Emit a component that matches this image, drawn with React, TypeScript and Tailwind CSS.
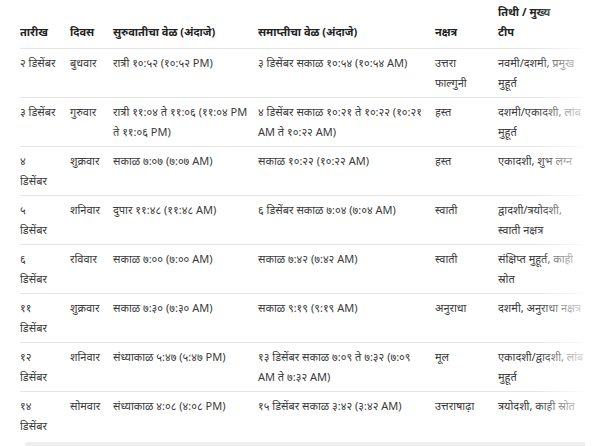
type Row = {
    date: string[];
    day: string;
    start: string[];
    end: string[];
    nakshatra: string[];
    tithi: string[];
}

const rows: Row[] = [
    { date: ["२ डिसेंबर"], day: "बुधवार", start: ["रात्री १०:५२ (१०:५२ PM)"], end: ["३ डिसेंबर सकाळ १०:५४ (१०:५४ AM)"], nakshatra: ["उत्तरा", "फाल्गुनी"], tithi: ["नवमी/दशमी, प्रमुख", "मुहूर्त"] },
    { date: ["३ डिसेंबर"], day: "गुरुवार", start: ["रात्री ११:०४ ते ११:०६ (११:०४ PM", "ते ११:०६ PM)"], end: ["४ डिसेंबर सकाळ १०:२१ ते १०:२२ (१०:२१", "AM ते १०:२२ AM)"], nakshatra: ["हस्त"], tithi: ["दशमी/एकादशी, लांब", "मुहूर्त"] },
    { date: ["४", "डिसेंबर"], day: "शुक्रवार", start: ["सकाळ ७:०७ (७:०७ AM)"], end: ["सकाळ १०:२२ (१०:२२ AM)"], nakshatra: ["हस्त"], tithi: ["एकादशी, शुभ लग्न"] },
    { date: ["५", "डिसेंबर"], day: "शनिवार", start: ["दुपार ११:४८ (११:४८ AM)"], end: ["६ डिसेंबर सकाळ ७:०४ (७:०४ AM)"], nakshatra: ["स्वाती"], tithi: ["द्वादशी/त्रयोदशी,", "स्वाती नक्षत्र"] },
    { date: ["६", "डिसेंबर"], day: "रविवार", start: ["सकाळ ७:०० (७:०० AM)"], end: ["सकाळ ७:४२ (७:४२ AM)"], nakshatra: ["स्वाती"], tithi: ["संक्षिप्त मुहूर्त, काही", "स्रोत"] },
    { date: ["११", "डिसेंबर"], day: "शुक्रवार", start: ["सकाळ ७:३० (७:३० AM)"], end: ["सकाळ ९:१९ (९:१९ AM)"], nakshatra: ["अनुराधा"], tithi: ["दशमी, अनुराधा नक्षत्र"] },
    { date: ["१२", "डिसेंबर"], day: "शनिवार", start: ["संध्याकाळ ५:४७ (५:४७ PM)"], end: ["१३ डिसेंबर सकाळ ७:०९ ते ७:३२ (७:०९", "AM ते ७:३२ AM)"], nakshatra: ["मूल"], tithi: ["एकादशी/द्वादशी, लांब", "मुहूर्त"] },
    { date: ["१४", "डिसेंबर"], day: "सोमवार", start: ["संध्याकाळ ४:०८ (४:०८ PM)"], end: ["१५ डिसेंबर सकाळ ३:४२ (३:४२ AM)"], nakshatra: ["उत्तराषाढ़ा"], tithi: ["त्रयोदशी, काही स्रोत"] },
]

const headers: string[][] = [["तारीख"], ["दिवस"], ["सुरुवातीचा वेळ (अंदाजे)"], ["समाप्तीचा वेळ (अंदाजे)"], ["नक्षत्र"], ["तिथी / मुख्य", "टीप"]]

// one span per line, so the wraps land where the original table wraps
const Lines = ({ lines }: { lines: string[] }) => (
    <>
        {lines.map((l, i) => (
            <span key={i} className="block whitespace-nowrap">{l}</span>
        ))}
    </>
)

const App = () => {
    return (
        <div className="w-[597px] h-[446px] overflow-hidden bg-white px-5 font-['Noto_Sans','Liberation_Sans',sans-serif] text-[11px] leading-5">
            <div className="relative w-[565px] overflow-hidden">
                <table className="w-[563px] table-fixed border-collapse text-left">
                    <colgroup>
                        <col className="w-[50px]" />
                        <col className="w-[43px]" />
                        <col className="w-[145px]" />
                        <col className="w-[177px]" />
                        <col className="w-[63px]" />
                        <col className="w-[85px]" />
                    </colgroup>
                    <thead>
                        <tr className="border-b border-[#e6e6e6]">
                            {headers.map((h) => (
                                <th key={h[0]} className="pt-[2px] pb-[6px] pr-2 align-bottom font-bold text-[#222]">
                                    <Lines lines={h} />
                                </th>
                            ))}
                        </tr>
                    </thead>
                    <tbody className="text-[#3a3a3a]">
                        {rows.map((r) => (
                            <tr key={r.date.join(" ")} className="border-b border-[#e6e6e6] last:border-b-0">
                                <td className="h-[49px] py-1 pr-2 align-top"><Lines lines={r.date} /></td>
                                <td className="py-1 pr-2 align-top"><Lines lines={[r.day]} /></td>
                                <td className="py-1 pr-2 align-top"><Lines lines={r.start} /></td>
                                <td className="py-1 pr-2 align-top"><Lines lines={r.end} /></td>
                                <td className="py-1 pr-2 align-top"><Lines lines={r.nakshatra} /></td>
                                <td className="py-1 pr-2 align-top"><Lines lines={r.tithi} /></td>
                            </tr>
                        ))}
                    </tbody>
                </table>
                {/* fade on the right edge */}
                <div className="pointer-events-none absolute right-0 top-0 bottom-0 w-[48px] bg-gradient-to-l from-white/85 to-transparent" />
            </div>
            <div className="ml-[5px] mt-[1px] h-[6px] w-[560px] rounded-l-sm bg-[#eeeeee]" />
        </div>
    )
}

export default App
